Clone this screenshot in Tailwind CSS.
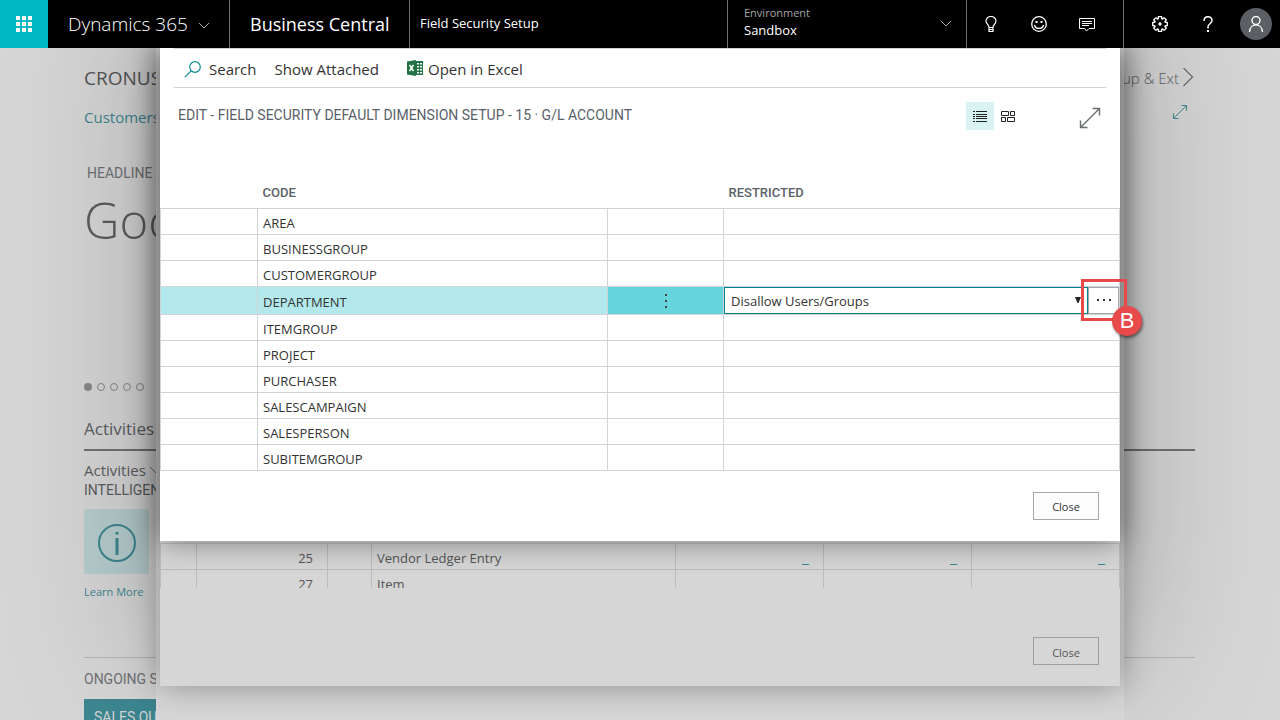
<!DOCTYPE html>
<html lang="en">
<head>
    <meta charset="UTF-8">
    <meta name="viewport" content="width=device-width, initial-scale=1.0">
    <title>Field Security Setup</title>
    <script src="https://cdn.jsdelivr.net/npm/@tailwindcss/browser@4"></script>
</head>
<body class="flex h-screen flex-col overflow-hidden bg-[#d6d6d6] font-['Open_Sans','Noto_Sans',sans-serif] text-[13px] text-[#333]">

    <!-- Top bar -->
    <header class="relative z-40 flex h-12 shrink-0 bg-black text-white">
        <button type="button" aria-label="Apps" class="flex w-12 items-center justify-center bg-[#00b7c3]">
            <svg class="size-4" viewBox="0 0 16 16" fill="#fff"><path d="M0 0h4v4H0zM6 0h4v4H6zM12 0h4v4h-4zM0 6h4v4H0zM6 6h4v4H6zM12 6h4v4h-4zM0 12h4v4H0zM6 12h4v4H6zM12 12h4v4h-4z"/></svg>
        </button>
        <button type="button" class="flex w-[182px] items-center gap-[10px] border-r border-[#6b6e73] pl-5 text-[19px] font-light">
            Dynamics 365
            <svg class="mt-1 h-3 w-3" viewBox="0 0 12 12" fill="none" stroke="#a6a6a6"><path d="M1 3l5 5 5-5"/></svg>
        </button>
        <a href="#" class="flex w-[180px] items-center border-r border-[#6b6e73] pl-5 text-[18px]">Business Central</a>
        <div class="flex min-w-0 flex-1 items-center pl-[10px] text-[13px]">Field Security Setup</div>
        <button type="button" class="flex w-[240px] items-center justify-between border-x border-[#6b6e73] pr-[14px] pl-4 text-left">
            <span class="pb-1">
                <span class="block text-[11px] leading-4 text-[#a6a6a6]">Environment</span>
                <span class="block leading-[18px]">Sandbox</span>
            </span>
            <svg class="h-3 w-3" viewBox="0 0 12 12" fill="none" stroke="#a6a6a6"><path d="M1 3l5 5 5-5"/></svg>
        </button>
        <div class="flex w-[157px] border-r border-[#6b6e73]">
            <button type="button" aria-label="Tips" class="flex w-12 items-center justify-center">
                <svg class="size-4" viewBox="0 0 16 16" fill="none" stroke="#fff" stroke-width="1.2"><path d="M6 12.500V11C6 9 3 8 3 5a5 4.500 0 0 1 10 0c0 3-3 4-3 6v1.500M6 11.500h4M6 12v3.500h4V12M6 13.500h4"/></svg>
            </button>
            <button type="button" aria-label="Feedback" class="flex w-12 items-center justify-center">
                <svg class="size-4" viewBox="0 0 16 16" fill="none" stroke="#fff" stroke-width="1.300"><circle cx="8" cy="8" r="7.300"/><path d="M3.500 9c1 4.500 8 4.500 9 0"/><path fill="#fff" stroke="none" d="M4.500 5h2v2h-2zM9.500 5h2v2h-2z"/></svg>
            </button>
            <button type="button" aria-label="Messages" class="flex w-12 items-center justify-center">
                <svg class="size-4" viewBox="0 0 16 16" fill="none" stroke="#fff"><path d="M.5 2.500h15v10H10L7.500 15 5.500 12.500H.5z"/><path d="M3 5.500h10M3 7.500h10M3 9.500h7"/></svg>
            </button>
        </div>
        <div class="flex pl-3">
            <button type="button" aria-label="Settings" class="flex w-12 items-center justify-center">
                <svg class="size-4" viewBox="0 0 16 16" fill="none" stroke="#fff" stroke-width="1.300" stroke-linejoin="round"><path d="M6.400 2.600L6.300.7h3.400l-.1 1.900 1 .5L12 1.600 14.400 4l-1.500 1.400.5 1 1.900-.1v3.400l-1.900-.1-.5 1 1.500 1.400-2.400 2.400-1.400-1.500-1 .5.1 1.900H6.300l.1-1.900-1-.5L4 14.400 1.600 12l1.500-1.400-.5-1-1.900.1V6.300l1.900.1.5-1L1.600 4 4 1.600l1.400 1.500z"/><circle cx="8" cy="8" r="1" fill="#fff"/></svg>
            </button>
            <button type="button" aria-label="Help" class="flex w-12 items-center justify-center">
                <svg class="size-4" viewBox="0 0 16 16" fill="none" stroke="#fff" stroke-width="1.500"><path d="M4 5C4-.5 12-.5 12 4.500 12 7.500 8 7.500 8 11v1.500"/><path fill="#fff" stroke="none" d="M7 14h2v2H7z"/></svg>
            </button>
            <button type="button" aria-label="Account" class="flex w-12 items-center justify-center">
                <span class="flex size-8 items-center justify-center rounded-full bg-[#5c5f63]">
                    <svg class="size-4" viewBox="0 0 16 16" fill="none" stroke="#fff" stroke-width="1.400"><circle cx="8" cy="4.500" r="4"/><path d="M1.500 16C2 6.500 14 6.500 14.500 16"/></svg>
                </span>
            </button>
        </div>
    </header>

    <div class="relative flex-1 overflow-hidden">
        <!-- Role center behind the dialogs -->
        <main class="pt-4 pr-[85px] pl-[84px] text-[#5b5e61]">
            <div class="flex h-7 items-center justify-between">
                <h1 class="text-[19px] font-medium text-[#555]">CRONUS USA</h1>
                <a href="#" class="flex items-center gap-1 text-[15px] font-light">Setup &amp; Ext
                    <svg class="h-5 w-3" viewBox="0 0 12 20" fill="none" stroke="#6b6e71" stroke-width="1.200"><path d="M.5 0l9 9-9 9"/></svg>
                </a>
            </div>
            <nav class="mt-[11px] flex h-7 items-center justify-between pr-2 text-[15px] text-[#3d8791]">
                <a href="#">Customers</a>
                <button type="button" aria-label="Expand" class="pb-[10px]">
                    <svg class="size-[14px]" viewBox="0 0 14 14" fill="none" stroke="#3d8791"><path d="M1 13L13 1M8.500.5h5v5M.5 8.500v5h5"/></svg>
                </button>
            </nav>
            <p class="mt-[30px] pl-[3px] font-[Roboto,sans-serif] text-[14px] leading-6 text-[#6e7174]">HEADLINE</p>
            <p class="text-[49px] leading-[70px] font-light">Good morning!</p>
            <div class="mt-[128px] flex gap-[5px]">
                <span class="size-2 rounded-full bg-[#85888a]"></span>
                <span class="size-2 rounded-full border border-[#85888a]"></span>
                <span class="size-2 rounded-full border border-[#85888a]"></span>
                <span class="size-2 rounded-full border border-[#85888a]"></span>
                <span class="size-2 rounded-full border border-[#85888a]"></span>
            </div>
            <h2 class="mt-6 border-b-2 border-[#707075] pb-[6px] text-[17px] leading-7">Activities</h2>
            <button type="button" class="mt-[7px] flex items-center text-[15px] leading-6">Activities
                <svg class="ml-1 h-3 w-3" viewBox="0 0 12 12" fill="none" stroke="#6b6e71"><path d="M0 3l6 6 6-6"/></svg>
            </button>
            <p class="font-[Roboto,sans-serif] text-[14px] leading-4">INTELLIGENT CLOUD</p>
            <div class="mt-[11px] flex size-[65px] items-center justify-center bg-[#b7cdce]">
                <svg class="size-10" viewBox="0 0 40 40" fill="none" stroke="#3d8791" stroke-width="2"><circle cx="20" cy="21" r="18"/><path stroke-width="3" d="M20 16v17M20 10v2.500"/></svg>
            </div>
            <a href="#" class="mt-2 block text-[11px] leading-5 text-[#3d8791]">Learn More</a>
            <h3 class="mt-[55px] border-t border-[#b5b5b5] pt-[11px] font-[Roboto,sans-serif] text-[14px] leading-5 text-[#6e7174]">ONGOING SALES</h3>
            <div class="mt-[10px] w-40 bg-[#3d8791] px-[10px] py-2 font-[Roboto,sans-serif] text-[14px] leading-5 text-[#d6d6d6]">SALES QUOTES</div>
        </main>

        <!-- Page sheet -->
        <div class="absolute inset-y-0 left-1/2 w-[968px] max-w-full -translate-x-1/2 bg-[#d6d6d6] shadow-[0_-60px_140px_rgba(0,0,0,0.25)]"></div>

        <!-- Setup list under the active dialog -->
        <section class="absolute top-0 left-1/2 w-[960px] max-w-full -translate-x-1/2 bg-[#d6d6d6] pt-[495px] shadow-[0_0_30px_rgba(0,0,0,0.35)]">
            <div class="h-[45px] overflow-hidden">
                <table class="w-full table-fixed border-collapse text-[13px] text-[#555] [&_td]:border [&_td]:border-[#bcbcbc] [&_tr]:h-[26px]">
                    <colgroup>
                        <col class="w-[36px]"><col class="w-[131px]"><col class="w-[44px]"><col class="w-[304px]"><col class="w-[148px]"><col class="w-[148px]"><col>
                    </colgroup>
                    <tbody>
                        <tr>
                            <td></td><td class="pt-1 pr-[14px] text-right">25</td><td></td><td class="pt-1 pl-[5px]">Vendor Ledger Entry</td>
                            <td class="pr-[14px] text-right text-[16px] leading-5 text-[#3d8791]"><a href="#">_</a></td>
                            <td class="pr-[14px] text-right text-[16px] leading-5 text-[#3d8791]"><a href="#">_</a></td>
                            <td class="pr-[14px] text-right text-[16px] leading-5 text-[#3d8791]"><a href="#">_</a></td>
                        </tr>
                        <tr>
                            <td></td><td class="pt-1 pr-[14px] text-right">27</td><td></td><td class="pt-1 pl-[5px]">Item</td><td></td><td></td><td></td>
                        </tr>
                    </tbody>
                </table>
            </div>
            <div class="flex justify-end pt-[49px] pr-[21px] pb-[21px]">
                <button type="button" class="h-7 w-[66px] border border-[#9e9e9e] pt-1 text-[11px] text-[#555]">Close</button>
            </div>
        </section>

        <!-- Active dialog -->
        <section role="dialog" aria-labelledby="dialog-title" class="absolute top-0 left-1/2 w-[960px] max-w-full -translate-x-1/2 bg-white shadow-[0_0_30px_rgba(0,0,0,0.45)]">
            <div class="mx-[14px] flex h-10 items-center border-y border-[#d2d3d6] pt-[3px] pl-[10px] text-[15px]">
                <button type="button" class="flex items-center gap-2">
                    <svg class="size-[17px]" viewBox="0 0 17 17" fill="none" stroke="#0f8a98" stroke-width="1.200"><circle cx="11" cy="6" r="5.300"/><path d="M7.200 9.800L.8 16.200"/></svg>
                    Search
                </button>
                <button type="button" class="ml-[18px]">Show Attached</button>
                <button type="button" class="ml-[28px] flex items-center gap-1">
                    <svg class="mb-1 h-4 w-[17px]" viewBox="0 0 17 16"><path fill="#217346" d="M0 1.500L9 0v16l-9-1.500zM9 1h7v14H9z"/><path fill="#fff" d="M10 3h2v1.500h-2zM13 3h2v1.500h-2zM10 6h2v1.500h-2zM13 6h2v1.500h-2zM10 9h2v1.500h-2zM13 9h2v1.500h-2zM10 12h2v1.500h-2zM13 12h2v1.500h-2z"/><path fill="none" stroke="#fff" stroke-width="1.500" d="M2.500 5l4 6M6.500 5l-4 6"/></svg>
                    Open in Excel
                </button>
            </div>

            <div class="flex items-start pt-[14px] pr-[19px] pl-[18px]">
                <h2 id="dialog-title" class="flex-1 font-[Roboto,sans-serif] text-[14px] leading-[26px] text-[#596168]">EDIT - FIELD SECURITY DEFAULT DIMENSION SETUP - 15 · G/L ACCOUNT</h2>
                <button type="button" aria-label="List view" class="flex size-7 items-center justify-center bg-[#d9f2f2]">
                    <svg class="h-[12px] w-[14px]" viewBox="0 0 14 12" stroke="#212121"><path d="M0 1.500h2M3 1.500h11M0 4.500h2M3 4.500h11M0 6.500h2M3 6.500h11M0 8.500h2M3 8.500h11M0 11.500h2M3 11.500h11"/></svg>
                </button>
                <button type="button" aria-label="Tile view" class="flex size-7 items-center justify-center">
                    <svg class="h-[12px] w-[14px]" viewBox="0 0 14 12" fill="none" stroke="#212121"><path d="M.5 1.500h7v4h-7zM9.500 1.500h4v4h-4zM.5 7.500h4v4h-4zM6.500 7.500h7v4h-7z"/></svg>
                </button>
                <button type="button" aria-label="Expand" class="mt-[5px] ml-[57px]">
                    <svg class="size-[22px]" viewBox="0 0 22 22" fill="none" stroke="#6b6e71" stroke-width="1.400"><path d="M1.500 20.500l19-19M13.500 1.500h7v7M1.500 13.500v7h7"/></svg>
                </button>
            </div>

            <table class="mt-[46px] w-full table-fixed border-collapse text-[13px] [&_tbody_td]:border [&_tbody_td]:border-[#d2d3d6] [&_tbody_td]:pl-[5px]">
                <colgroup>
                    <col class="w-[97px]"><col class="w-[350px]"><col class="w-[116px]"><col>
                </colgroup>
                <thead>
                    <tr class="h-8 text-left font-[Roboto,sans-serif] text-[13px] text-[#596168]">
                        <td></td><th scope="col" class="pt-[2px] pl-[5px] font-medium">CODE</th><td></td><th scope="col" class="pt-[2px] pl-[5px] font-medium">RESTRICTED</th>
                    </tr>
                </thead>
                <tbody>
                    <tr class="h-[26px]"><td></td><td class="pt-[5px]">AREA</td><td></td><td></td></tr>
                    <tr class="h-[26px]"><td></td><td class="pt-[5px]">BUSINESSGROUP</td><td></td><td></td></tr>
                    <tr class="h-[26px]"><td></td><td class="pt-[5px]">CUSTOMERGROUP</td><td></td><td></td></tr>
                    <tr class="h-[28px] bg-[#b3e9ec]">
                        <td></td>
                        <td class="pt-[5px]">DEPARTMENT</td>
                        <td class="bg-[#66d4db] !p-0 text-center">
                            <button type="button" aria-label="Row options" class="align-middle">
                                <svg class="h-[14px] w-2" viewBox="0 0 8 14" fill="#444"><path d="M3 0h2v2H3zM3 6h2v2H3zM3 12h2v2H3z"/></svg>
                            </button>
                        </td>
                        <td class="bg-white !p-0">
                            <div class="relative flex h-[27px]">
                                <select aria-label="Restricted" class="h-[27px] min-w-0 flex-1 appearance-none border border-[#00838f] bg-white pt-[3px] pl-[6px] text-[13px]">
                                    <option>Disallow Users/Groups</option>
                                    <option>Allow Users/Groups</option>
                                </select>
                                <svg class="pointer-events-none absolute top-[10px] right-[38px] h-[6px] w-[6px]" viewBox="0 0 6 6" fill="#222"><path d="M0 0h6L3.500 6h-1z"/></svg>
                                <button type="button" aria-label="Choose" class="flex w-[31px] items-center justify-center border border-[#a6a6a6]">
                                    <svg class="h-[2px] w-[14px]" viewBox="0 0 14 2" fill="#333"><path d="M0 0h2v2H0zM6 0h2v2H6zM12 0h2v2h-2z"/></svg>
                                </button>
                                <!-- Callout -->
                                <div class="pointer-events-none absolute -top-2 -right-2 h-[42px] w-[46px] border-3 border-[#e8494a]">
                                    <span class="absolute -right-[18px] -bottom-[18px] flex size-[30px] items-center justify-center rounded-full bg-[#e8494a] font-['Liberation_Sans',sans-serif] text-[22px] text-white shadow-[1px_2px_3px_rgba(0,0,0,0.5)]">B</span>
                                </div>
                            </div>
                        </td>
                    </tr>
                    <tr class="h-[26px]"><td></td><td class="pt-[5px]">ITEMGROUP</td><td></td><td></td></tr>
                    <tr class="h-[26px]"><td></td><td class="pt-[5px]">PROJECT</td><td></td><td></td></tr>
                    <tr class="h-[26px]"><td></td><td class="pt-[5px]">PURCHASER</td><td></td><td></td></tr>
                    <tr class="h-[26px]"><td></td><td class="pt-[5px]">SALESCAMPAIGN</td><td></td><td></td></tr>
                    <tr class="h-[26px]"><td></td><td class="pt-[5px]">SALESPERSON</td><td></td><td></td></tr>
                    <tr class="h-[26px]"><td></td><td class="pt-[5px]">SUBITEMGROUP</td><td></td><td></td></tr>
                </tbody>
            </table>

            <div class="flex justify-end pt-[21px] pr-[21px] pb-[21px]">
                <button type="button" class="h-7 w-[66px] border border-[#a6a6a6] bg-[#fdfdfd] pt-1 text-[11px]">Close</button>
            </div>
        </section>
    </div>
</body>
</html>
